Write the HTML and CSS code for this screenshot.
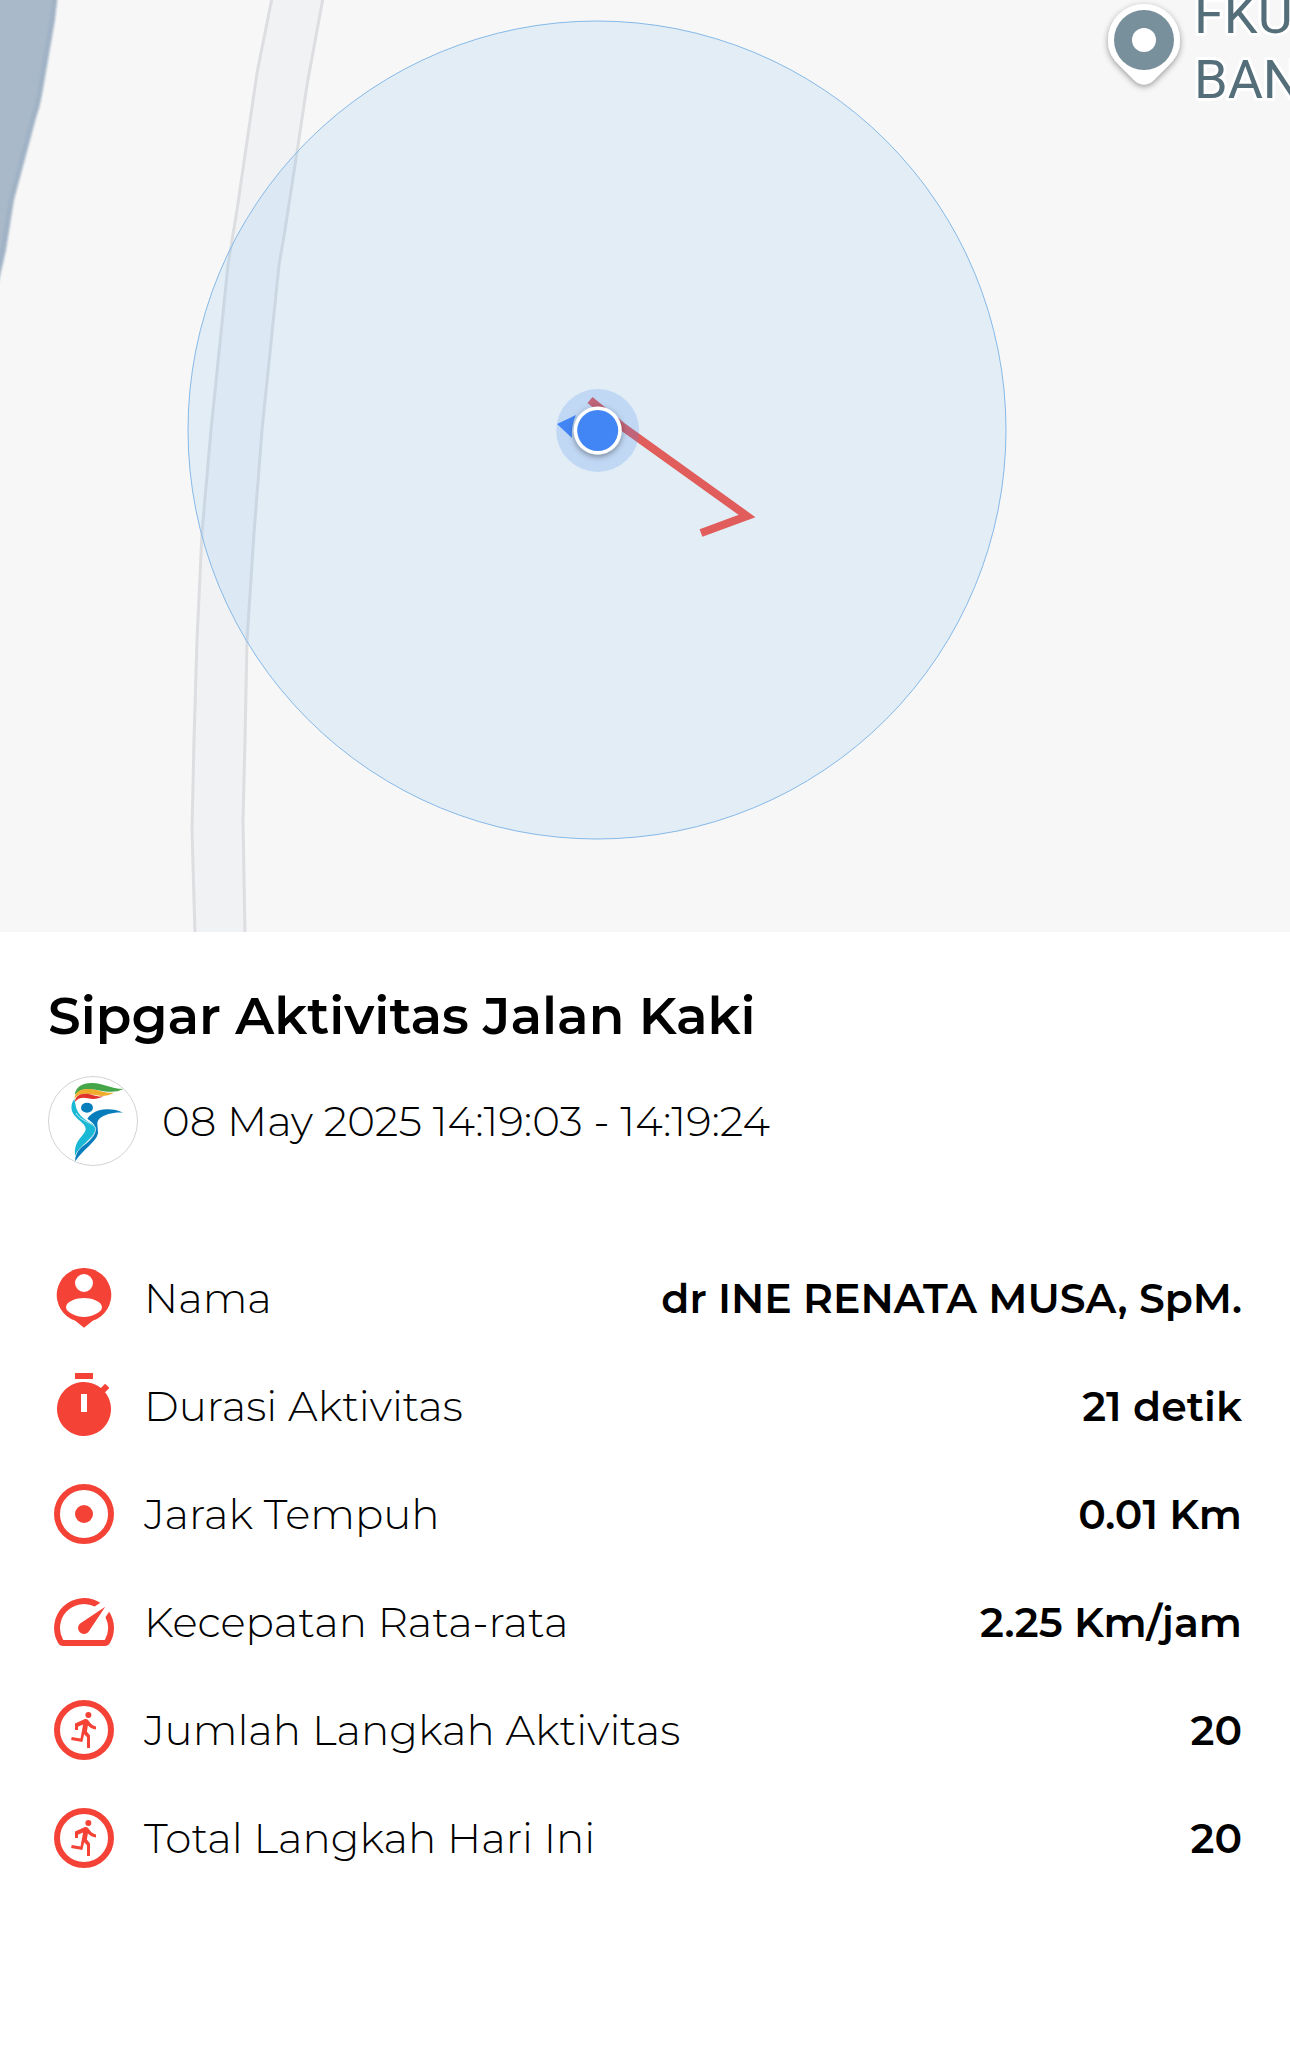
FILE: index.html
```html
<!DOCTYPE html>
<html lang="id">
<head>
<meta charset="utf-8">
<meta name="viewport" content="width=device-width, initial-scale=1">
<title>Sipgar Aktivitas Jalan Kaki</title>
<link rel="stylesheet" href="styles.css">
</head>
<body>
<svg class="defs" aria-hidden="true">
  <symbol id="run" viewBox="0 0 24 24">
    <circle cx="12" cy="12" r="9" fill="none" stroke="currentColor" stroke-width="2"/>
    <circle cx="13.45" cy="7" r="1"/>
    <path d="M9 12V9.8l3.3-1.45c.6-.15.95.1 1.25.6.6 1 1.4 1.75 2.45 1.9v1c-1.1-.1-2-.6-2.7-1.35l-.35 2L14 13.8V18h-1v-3.6l-.95-.95-.6 2.55-3.75-.7.2-1 2.95.5.85-4.6-1.7.7V12z"/>
  </symbol>
</svg>
<section class="map">
  <svg class="map-canvas" viewBox="0 0 1290 932" role="img" aria-label="Peta rute aktivitas">
    <defs>
      <filter id="soft" x="-20%" y="-20%" width="140%" height="140%"><feGaussianBlur stdDeviation="1"/></filter>
      <filter id="shade" x="-30%" y="-30%" width="160%" height="160%"><feDropShadow dx="0" dy="2" stdDeviation="3" flood-opacity=".4"/></filter>
    </defs>
    <g filter="url(#soft)">
      <path class="water" d="M-10-10H58L55 20 42 95Q40 107 36 118L14 200 6 250-10 320Z"/>
      <path class="shore" d="M56-10 52 20 39 95Q37 107 33 118L11 200 3 250-13 320"/>
    </g>
    <path class="road" d="M272-2 257 73 237 210 228 265 211 430 202 533 197 640 194 740 192 830 195 934H245L243 820 245 740 247 640 254 533 262 430 279 265 285 230 297 152 307 85 323-2Z"/>
    <path class="road-edge" d="M272-2 257 73 237 210 228 265 211 430 202 533 197 640 194 740 192 830 195 934M245 934 243 820 245 740 247 640 254 533 262 430 279 265 285 230 297 152 307 85 323-2"/>
    <circle class="accuracy" cx="597" cy="430" r="409"/>
    <path class="route" d="M590 400 623 427 747 516 701 533"/>
    <circle class="halo" cx="597.700" cy="430.500" r="41.500"/>
    <path class="dot" d="M557 424 576 415Q571 425 572 438Z"/>
    <circle class="white" cx="597.700" cy="430.500" r="24" filter="url(#shade)"/>
    <circle class="dot" cx="597.700" cy="430.500" r="20.500"/>
    <path class="white" d="M1144 4A36 36 0 0 0 1108 40C1108 52 1113 59 1120 66L1134 80Q1144 89 1154 80L1168 66C1175 59 1180 52 1180 40A36 36 0 0 0 1144 4Z" filter="url(#shade)"/>
    <circle class="pin" cx="1144" cy="40" r="30"/>
    <circle class="white" cx="1144" cy="40" r="12"/>
    <text class="place" x="1194" y="33">FKU</text>
    <text class="place" x="1194" y="98">BAN</text>
  </svg>
</section>
<main class="summary">
  <h1 class="title">Sipgar Aktivitas Jalan Kaki</h1>
  <div class="when">
    <svg class="logo" viewBox="24 33 270 270" aria-hidden="true">
      <circle cx="159" cy="168" r="133.500" fill="#fff" stroke="#bbb" stroke-width="2"/>
      <path fill="#44a648" d="M104 90C107 66 126 54 155 54 192 54 211 72 250 72 222 86 196 79 166 74 137 70 117 73 104 90Z"/>
      <path fill="#f0ac2d" d="M103 101C107 80 121 71 146 72 177 73 192 86 222 83 199 96 178 94 155 88 131 84 115 85 103 101Z"/>
      <path fill="#df332b" d="M104 112C106 95 116 86 136 86 157 86 166 96 190 94 174 103 158 104 144 100 126 96 114 99 104 112Z"/>
      <path fill="#19b8d4" d="M103 102C91 117 92 137 103 151 116 168 138 178 137 193 134 215 101 222 105 273 117 248 135 237 154 216 172 194 171 184 157 177 138 167 124 157 114 141 106 128 107 116 103 102Z"/>
      <path fill="#087dbc" d="M142 161C157 141 172 135 199 133Q226 132 250 143C220 141 195 148 178 161 167 172 175 184 174 205 169 231 128 254 106 289 104 260 117 249 136 237 158 220 168 200 166 186 163 176 153 170 142 161Z"/>
      <path fill="none" stroke="#fff" stroke-width="2" d="M108 144C122 171 163 174 167 190 167 218 137 234 121 249Q110 259 105 277"/>
      <ellipse cx="141" cy="128" rx="18" ry="15" fill="#087dbc"/>
    </svg>
    <p class="time">08 May 2025 14:19:03 - 14:19:24</p>
  </div>
  <dl class="stats">
    <div class="stat">
      <dt class="label"><svg class="icon" viewBox="0 0 24 24" aria-hidden="true"><path fill-rule="evenodd" d="M12 2a9 9 0 0 0-2.900 17.550L12 21.900l2.900-2.350A9 9 0 0 0 12 2zm0 2a3 3 0 1 1 0 6 3 3 0 0 1 0-6zm0 14.300c-2.500 0-6-1.500-6-3.220C6 13.100 9.500 12 12 12s6 1.100 6 3.080c0 1.720-3.500 3.220-6 3.220z"/></svg>Nama</dt>
      <dd class="value">dr INE RENATA MUSA, SpM.</dd>
    </div>
    <div class="stat">
      <dt class="label"><svg class="icon" viewBox="0 0 24 24" aria-hidden="true"><path fill-rule="evenodd" d="M9 1h6v2H9zM19.030 7.390l1.420-1.420c-.43-.51-.9-.99-1.410-1.410l-1.420 1.420A9 9 0 1 0 19.030 7.390zM11 8h2v6h-2z"/></svg>Durasi Aktivitas</dt>
      <dd class="value">21 detik</dd>
    </div>
    <div class="stat">
      <dt class="label"><svg class="icon" viewBox="0 0 24 24" aria-hidden="true"><circle cx="12" cy="12" r="9" fill="none" stroke="currentColor" stroke-width="2"/><circle cx="12" cy="12" r="3"/></svg>Jarak Tempuh</dt>
      <dd class="value">0.01 Km</dd>
    </div>
    <div class="stat">
      <dt class="label"><svg class="icon" viewBox="0 0 24 24" aria-hidden="true"><path d="M20.380 8.570l-1.230 1.850a8 8 0 0 1-.22 7.580H5.070A8 8 0 0 1 15.580 6.850l1.850-1.230A10 10 0 0 0 3.350 19a2 2 0 0 0 1.720 1h13.850a2 2 0 0 0 1.740-1 10 10 0 0 0-.27-10.440zM10.590 15.410a2 2 0 0 0 2.830 0l5.660-8.490-8.490 5.660a2 2 0 0 0 0 2.830z"/></svg>Kecepatan Rata-rata</dt>
      <dd class="value">2.25 Km/jam</dd>
    </div>
    <div class="stat">
      <dt class="label"><svg class="icon" aria-hidden="true"><use href="#run"/></svg>Jumlah Langkah Aktivitas</dt>
      <dd class="value">20</dd>
    </div>
    <div class="stat">
      <dt class="label"><svg class="icon" aria-hidden="true"><use href="#run"/></svg>Total Langkah Hari Ini</dt>
      <dd class="value">20</dd>
    </div>
  </dl>
</main>
</body>
</html>
```
FILE: styles.css
```css
* { box-sizing: border-box; }
body {
  margin: 0;
  background: #fff;
  color: #000;
  font-family: Montserrat, Inter, sans-serif;
  font-size: 42px;
  line-height: 48px;
}
.defs { display: none; }

.map { background: #f7f7f7; }
.map-canvas { display: block; width: 100%; height: auto; }
.water { fill: #a9b9ca; }
.shore { fill: none; stroke: #a0b2c5; stroke-width: 5; }
.road { fill: #f1f2f4; }
.road-edge { fill: none; stroke: #dddee1; stroke-width: 3; stroke-linejoin: round; }
.accuracy { fill: rgba(79, 167, 239, .125); stroke: #86b9e8; stroke-width: 1; }
.route { fill: none; stroke: #e05d5b; stroke-width: 8; }
.halo { fill: rgba(66, 133, 244, .2); }
.dot { fill: #4285f4; }
.white { fill: #fff; }
.pin { fill: #78909c; }
.place {
  font-family: Roboto, sans-serif;
  font-size: 54px;
  fill: #546e7a;
  stroke: #fff;
  stroke-width: 6;
  stroke-linejoin: round;
  paint-order: stroke;
}

.summary { padding: 54px 48px; }
.title { margin: 0; font-size: 52px; font-weight: 600; line-height: 60px; }
.when { display: flex; align-items: center; gap: 24px; margin-top: 30px; }
.logo { flex: none; width: 90px; height: 90px; }
.time { margin: 0; font-weight: 300; }

.stats { display: grid; gap: 36px; margin: 96px 0 0; }
.stat { display: flex; align-items: center; justify-content: space-between; gap: 24px; }
.label { display: flex; align-items: center; gap: 24px; font-weight: 300; }
.icon { flex: none; width: 72px; height: 72px; color: #f44336; fill: currentColor; }
.value { margin: 0; font-size: 41px; font-weight: 600; text-align: right; }
```
